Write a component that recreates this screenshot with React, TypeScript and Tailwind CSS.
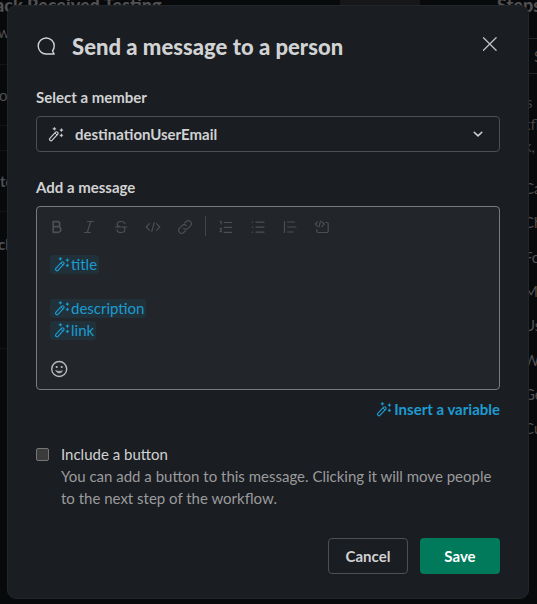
import React from "react";

function Wand({ size = 16, className = "" }: { size?: number; className?: string }) {
  return (
    <svg width={size} height={size} viewBox="0 0 16 16" fill="none" className={`shrink-0 ${className}`}>
      <rect x="-1.45" y="-5.5" width="2.9" height="11" rx="1.2" transform="translate(5.8 10.300) rotate(43)" stroke="currentColor" strokeWidth="1.2" />
      <path d="M7 7.100l2.100 2" stroke="currentColor" strokeWidth="1" />
      <path
        d="M6.400 1l.6 1.200 1.200.6-1.200.6-.6 1.200-.6-1.200-1.200-.6 1.200-.6zM13.400 2.300l.6 1.200 1.200.6-1.200.6-.6 1.200-.6-1.200-1.200-.6 1.200-.6zM13.400 7.600l.6 1.200 1.200.6-1.200.6-.6 1.200-.6-1.200-1.200-.6 1.200-.6z"
        fill="currentColor"
        stroke="currentColor"
        strokeWidth=".3"
      />
    </svg>
  );
}

function Tool({ children }: { children: React.ReactNode }) {
  return (
    <button className="flex h-5 w-8 items-center justify-center">
      <svg width="16" height="16" viewBox="0 0 16 16" fill="none" stroke="currentColor" strokeWidth="1.2" strokeLinecap="round" strokeLinejoin="round">
        {children}
      </svg>
    </button>
  );
}

function Variable({ name }: { name: string }) {
  return (
    <span className="inline-flex h-[19px] items-center rounded-[3px] bg-[#20313a] pr-[2px] pl-[4px] text-[#1d9bd1]">
      <Wand size={16} className="mr-px" />
      {name}
    </span>
  );
}

const steps = ["Ca", "Ch", "Fo", "M", "Us", "W", "Ge", "Cu"];

function Backdrop() {
  return (
    <div className="flex h-full overflow-hidden whitespace-nowrap text-[15px] leading-[20px] text-[#505052]">
      <div className="flex w-[340px] shrink-0 flex-col">
        <div className="h-[22px] shrink-0">
          <div className="-mt-[6px] -ml-[5px] text-[18px] leading-[22px] font-black">ack Received Testing</div>
        </div>
        <div className="-ml-[2px] h-[42px] shrink-0">w</div>
        <div className="flex h-[62px] shrink-0 items-center border-y border-[#141416]">
          <span className="-ml-[1px]">o</span>
        </div>
        <div className="h-[24px] shrink-0" />
        <div className="flex h-[62px] shrink-0 items-center border-y border-[#141416] font-bold">to</div>
        <div className="h-[137px] shrink-0 border-b border-[#141416] pt-[22px] font-bold">
          <span className="-ml-[2px]">ck</span>
        </div>
      </div>
      <div className="h-[8px] w-[80px] shrink-0 bg-[#171719]" />
      <div className="ml-[77px] flex w-[40px] shrink-0 flex-col">
        <div className="h-[38px] shrink-0">
          <div className="-mt-[6px] text-[18px] leading-[22px] font-black">Steps</div>
        </div>
        <div className="flex h-[36px] shrink-0 items-center border-y border-[#242426] pl-[37px]">S</div>
        <div className="h-[97px] shrink-0 pt-[17px] pl-[29px] text-[15px] leading-[22px] text-[#444446]">
          <div>s</div>
          <div className="-ml-[3px]">kfl</div>
          <div className="-ml-[2px]">k,</div>
        </div>
        {steps.map((step) => (
          <div key={step} className="flex h-[34.3px] shrink-0 items-center pl-[27px]">
            {step}
          </div>
        ))}
      </div>
    </div>
  );
}

export default function App() {
  return (
    <div className="relative h-[604px] w-[537px] overflow-hidden bg-[#08090b] font-['Lato',sans-serif]">
      <Backdrop />
      <div className="absolute top-[5px] left-[7px] flex h-[594px] w-[522px] flex-col rounded-[9px] border border-[#222529] bg-[#1a1d21] px-[28px] text-[15px] leading-[22px] text-[#d1d2d3]">
        <header className="mt-[26px] flex h-[30px] items-center">
          <svg width="20" height="20" viewBox="0 0 20 20" fill="none" stroke="currentColor" strokeWidth="1.4" strokeLinejoin="round" className="-mt-[2px] shrink-0">
            <path d="M18.200 10a8 8 0 1 0-8 8h8l-1.700-3A8 8 0 0 0 18.200 10z" />
          </svg>
          <h1 className="-mt-px ml-[16px] flex-1 text-[22px] leading-[30px] font-black tracking-[0.03px]">Send a message to a person</h1>
          <button aria-label="Close" className="mr-[2px] -mt-[6px]">
            <svg width="16" height="16" viewBox="0 0 16 16" fill="none" stroke="#bfc0c1" strokeWidth="1.3" strokeLinecap="round">
              <path d="M1.500 1.700l12.600 12.600M14.100 1.700L1.500 14.300" />
            </svg>
          </button>
        </header>

        <label className="mt-[24px] font-bold">Select a member</label>
        <div className="mt-[8px] flex h-[36px] shrink-0 items-center rounded-[4px] border border-[#4d4f52] pr-[14px] pl-[11px]">
          <Wand />
          <span className="ml-[11px] flex-1 font-bold">destinationUserEmail</span>
          <svg width="14" height="14" viewBox="0 0 14 14" fill="none" stroke="currentColor" strokeWidth="1.5" strokeLinecap="round" strokeLinejoin="round">
            <path d="M3.200 5.200L7 8.900l3.800-3.700" />
          </svg>
        </div>

        <label className="mt-[24px] font-bold">Add a message</label>
        <div className="mt-[8px] flex h-[184px] shrink-0 flex-col rounded-[4px] border border-[#797b7d] bg-[#222529] px-[13px]">
          <div className="-ml-[9px] mt-[10px] flex items-center text-[#4d4f52]">
            <Tool>
              <path d="M4.200 2.700h4.100a2.500 2.500 0 0 1 0 5H4.200zM4.200 7.700h4.800a2.800 2.800 0 0 1 0 5.600H4.200z" strokeWidth="1.700" />
            </Tool>
            <Tool>
              <path d="M6.500 2.500h6M3.500 13.500h6M9.700 2.500l-3.400 11" />
            </Tool>
            <Tool>
              <path d="M2.300 8h11.500M12 4.700C11.500 3 10 2.500 8 2.500c-2.200 0-3.800 1-3.800 2.800C4.200 6.700 5.200 7.500 7 8M4 10.800c.3 1.900 1.900 2.700 4 2.700 2.400 0 4-1 4-2.900 0-1.200-.8-2-1.800-2.600" />
            </Tool>
            <Tool>
              <path d="M4.500 4.700L1.200 8l3.300 3.300M11.500 4.700L14.800 8l-3.300 3.300M9.200 3.700L6.800 12.300" />
            </Tool>
            <Tool>
              <path d="M6.600 9.400a3 3 0 0 0 4.300 0l2.500-2.500a3 3 0 0 0-4.300-4.300L7.700 4M9.400 6.600a3 3 0 0 0-4.300 0L2.600 9.100a3 3 0 0 0 4.300 4.300L8.300 12" />
            </Tool>
            <span className="-mt-[2px] mr-[4px] ml-[4px] h-[20px] w-px bg-[#43454a]" />
            <Tool>
              <path d="M6.200 3.500h7.500M6.200 8.300h7.500M6.200 13.300h7.500M2.200 2.700l.9-.5V5M2 9.900c.3-.8 1.800-.6 1.500.4L2 12.700h1.700" />
            </Tool>
            <Tool>
              <path d="M6 3.200h8M6 8.200h8M6 13.200h8M2.300 3.200h.4M2.300 8.200h.4M2.300 13.200h.4" />
            </Tool>
            <Tool>
              <path d="M2.500 2.500v11M5.500 3h7M5.500 8h8.500M5.500 13h6" />
            </Tool>
            <Tool>
              <path d="M3.500 2.800L1.300 5l2.200 2.300M8 2.800L10.200 5 8 7.300M6.500 2.200L5 7.800M12 3.500h1c.8 0 1.200.4 1.200 1.200v7.600c0 .8-.4 1.200-1.200 1.200H4c-.8 0-1.200-.4-1.200-1.200v-2" />
            </Tool>
          </div>
          <div className="mt-[16px] flex flex-col items-start">
            <div className="flex h-[22px] items-center"><Variable name="title" /></div>
            <div className="h-[22px]" />
            <div className="flex h-[22px] items-center"><Variable name="description" /></div>
            <div className="flex h-[22px] items-center"><Variable name="link" /></div>
          </div>
          <svg width="18" height="18" viewBox="0 0 18 18" fill="none" stroke="#b9babc" strokeWidth="1.400" strokeLinecap="round" className="mt-[19px]">
            <circle cx="9.200" cy="9" r="7.500" />
            <path d="M6 10.700c.5 1.500 1.700 2.200 3.200 2.200s2.700-.7 3.200-2.200c-1.800.8-4.600.8-6.400 0z" fill="#b9babc" strokeWidth=".6" />
            <circle cx="6.700" cy="7" r="1.100" fill="#b9babc" stroke="none" />
            <circle cx="11.700" cy="7" r="1.100" fill="#b9babc" stroke="none" />
          </svg>
        </div>

        <button className="mt-[8px] flex items-center self-end font-bold text-[#1d9bd1]">
          <Wand className="mr-[2px]" />
          Insert a variable
        </button>

        <div className="mt-[23px] flex">
          <span className="mt-[5px] mr-[12px] h-[13px] w-[13px] shrink-0 rounded-[2px] border border-[#767676] bg-[#3b3b3b]" />
          <div>
            <div>Include a button</div>
            <p className="text-[#9a9b9d]">
              You can add a button to this message. Clicking it will move people
              <br />
              to the next step of the workflow.
            </p>
          </div>
        </div>

        <footer className="mt-[29px] flex justify-end gap-[12px] font-bold">
          <button className="h-[36px] w-[80px] rounded-[4px] border border-[#4d4f52]">Cancel</button>
          <button className="h-[36px] w-[80px] rounded-[4px] bg-[#007a5a] text-white">Save</button>
        </footer>
      </div>
    </div>
  );
}
